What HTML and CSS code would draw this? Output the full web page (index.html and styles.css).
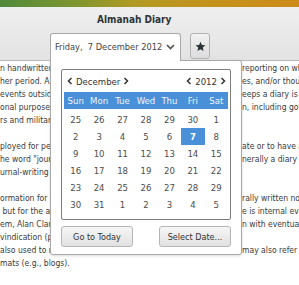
FILE: index.html
```html
<!DOCTYPE html>
<html lang="en">
<head>
  <meta charset="UTF-8" />
  <title>Almanah Diary</title>
  <link rel="stylesheet" href="styles.css">
</head>
<body>

  <div class="desktop"></div>

  <header class="titlebar">
    <div class="title">Almanah Diary</div>
    <div class="toolbar">
      <button class="date-combo">
        <span>Friday,&nbsp; 7 December 2012</span>
        <svg width="9" height="6" viewBox="0 0 9 6"><polyline points="1,1 4.5,4.5 8,1" fill="none" stroke="#505050" stroke-width="1.6"/></svg>
      </button>
      <button class="star-btn">
        <svg width="11" height="11" viewBox="0 0 24 24"><path d="M12 1.5l3.1 7.1 7.7.7-5.8 5.1 1.7 7.6L12 18l-6.7 4 1.7-7.6L1.2 9.3l7.7-.7z" fill="#2e3436"/></svg>
      </button>
    </div>
  </header>

  <!-- diary text, only the edges show around the open popover -->
  <div class="entry">
    <div class="ln"><span>n handwritten</span><span>reporting on what</span></div>
    <div class="ln"><span>her period. A</span><span>es, and/or thoughts</span></div>
    <div class="ln"><span>events outside</span><span>eeps a diary is known</span></div>
    <div class="ln"><span>onal purposes</span><span>n, including government</span></div>
    <div class="ln"><span>rs and military</span><span></span></div>
    <div class="ln"><span></span><span></span></div>
    <div class="ln"><span>ployed for per</span><span>ate or to have a</span></div>
    <div class="ln"><span>he word "jour</span><span>nerally a diary has</span></div>
    <div class="ln"><span>urnal-writing</span><span></span></div>
    <div class="ln"><span></span><span></span></div>
    <div class="ln"><span>ormation for a</span><span>rally written not</span></div>
    <div class="ln"><span>&nbsp;but for the au</span><span>e is internal evidence</span></div>
    <div class="ln"><span>em, Alan Clark</span><span>n with eventual</span></div>
    <div class="ln"><span>vindication (pre</span><span></span></div>
    <div class="ln"><span>also used to m</span><span>may also refer</span></div>
    <div class="ln"><span class="wide">mats (e.g., blogs).</span><span></span></div>
  </div>

  <div class="popover">
    <div class="calendar">
      <div class="cal-head">
        <div class="spin">
          <svg width="6" height="8" viewBox="0 0 6 8"><polyline points="4.5,1 1.5,4 4.5,7" fill="none" stroke="#333" stroke-width="1.5"/></svg>
          <span>December</span>
          <svg width="6" height="8" viewBox="0 0 6 8"><polyline points="1.5,1 4.5,4 1.5,7" fill="none" stroke="#333" stroke-width="1.5"/></svg>
        </div>
        <div class="spin">
          <svg width="6" height="8" viewBox="0 0 6 8"><polyline points="4.5,1 1.5,4 4.5,7" fill="none" stroke="#333" stroke-width="1.5"/></svg>
          <span>2012</span>
          <svg width="6" height="8" viewBox="0 0 6 8"><polyline points="1.5,1 4.5,4 1.5,7" fill="none" stroke="#333" stroke-width="1.5"/></svg>
        </div>
      </div>
      <div class="weekdays">
        <span>Sun</span><span>Mon</span><span>Tue</span><span>Wed</span><span>Thu</span><span>Fri</span><span>Sat</span>
      </div>
      <div class="days">
        <span>25</span><span>26</span><span>27</span><span>28</span><span>29</span><span>30</span><span>1</span>
        <span>2</span><span>3</span><span>4</span><span>5</span><span>6</span><span class="sel">7</span><span>8</span>
        <span>9</span><span>10</span><span>11</span><span>12</span><span>13</span><span>14</span><span>15</span>
        <span>16</span><span>17</span><span>18</span><span>19</span><span>20</span><span>21</span><span>22</span>
        <span>23</span><span>24</span><span>25</span><span>26</span><span>27</span><span>28</span><span>29</span>
        <span>30</span><span>31</span><span>1</span><span>2</span><span>3</span><span>4</span><span>5</span>
      </div>
    </div>
    <div class="actions">
      <button class="btn">Go to Today</button>
      <button class="btn">Select Date...</button>
    </div>
  </div>

</body>
</html>
```

FILE: styles.css
```css
:root {
  --text: #3a3a3a;
  --border: #a9a9a9;
  --blue: #4a90d9;
}

body {
  margin: 0;
  width: 299px;
  height: 285px;
  overflow: hidden;
  position: relative;
  background: #fff;
  color: var(--text);
  font-family: "DejaVu Sans Condensed", "Liberation Sans", sans-serif;
}

button {
  font-family: inherit;
  margin: 0;
}

.desktop {
  height: 7px;
  background: linear-gradient(90deg, #4f8a3c 0%, #7e962e 25%, #b19a24 45%, #c4921c 70%, #cc8a1a 100%);
}

.titlebar {
  height: 53px;
  background: linear-gradient(#efefef, #e3e3e3);
  border-bottom: 1px solid #b9b9b9;
}

.title {
  padding: 7px 0 0 97px;
  height: 12px;
  line-height: 12px;
  font-size: 10px;
  font-weight: bold;
  color: #2e3436;
}

.toolbar {
  display: flex;
  align-items: flex-start;
  gap: 9px;
  padding: 7px 0 0 50px;
}

.date-combo {
  position: relative;
  z-index: 2;
  width: 131px;
  height: 28px;
  display: flex;
  align-items: center;
  justify-content: space-between;
  padding: 0 5px 2px 4px;
  background: #fff;
  border: 1px solid var(--border);
  border-bottom: none;
  border-radius: 3px 3px 0 0;
  font-size: 9.2px;
  color: #444;
}

.star-btn {
  width: 20px;
  height: 26px;
  display: flex;
  align-items: center;
  justify-content: center;
  padding: 0;
  background: linear-gradient(#f2f2f2, #dcdcdc);
  border: 1px solid #b3b3b3;
  border-radius: 3px;
}

.entry {
  padding-top: 1px;
  font-size: 8.5px;
}

.ln {
  display: flex;
  justify-content: space-between;
  height: 13px;
  line-height: 13px;
  white-space: nowrap;
}

.ln span {
  width: 50px;
  overflow: hidden;
}

.ln span + span {
  width: 57px;
}

.ln .wide {
  width: 90px;
}

/* open popover under the date button */
.popover {
  position: absolute;
  left: 50px;
  top: 60px;
  z-index: 1;
  width: 192px;
  height: 195px;
  padding: 8px 10px 0 10px;
  box-sizing: border-box;
  background: #fff;
  border: 1px solid var(--border);
  border-radius: 0 3px 3px 3px;
  box-shadow: 0 1px 3px rgba(0, 0, 0, 0.15);
}

.calendar {
  height: 151px;
  box-sizing: border-box;
  border: 1px solid #7d7d7d;
  border-radius: 2px;
  padding: 0 2px;
  font-size: 9.5px;
  color: #4d4d4d;
}

.cal-head {
  height: 22px;
  display: flex;
  align-items: center;
  justify-content: space-between;
  padding: 0 2px 0 3px;
  color: #333;
}

.spin {
  display: flex;
  align-items: center;
  gap: 3px;
}

.weekdays, .days {
  display: grid;
  grid-template-columns: repeat(7, 1fr);
  text-align: center;
}

.weekdays {
  height: 17px;
  line-height: 17px;
  background: var(--blue);
  color: #eef4fb;
}

.days {
  margin-top: 2px;
  grid-auto-rows: 17px;
  line-height: 17px;
}

.days .sel {
  background: var(--blue);
  color: #fff;
  font-weight: bold;
}

.actions {
  display: flex;
  justify-content: space-between;
  margin-top: 6px;
}

.btn {
  width: 72px;
  height: 21px;
  padding: 0;
  background: linear-gradient(#f6f6f6, #e1e1e1);
  border: 1px solid #b5b5b5;
  border-radius: 3px;
  font-size: 9px;
  color: #333;
}
```
